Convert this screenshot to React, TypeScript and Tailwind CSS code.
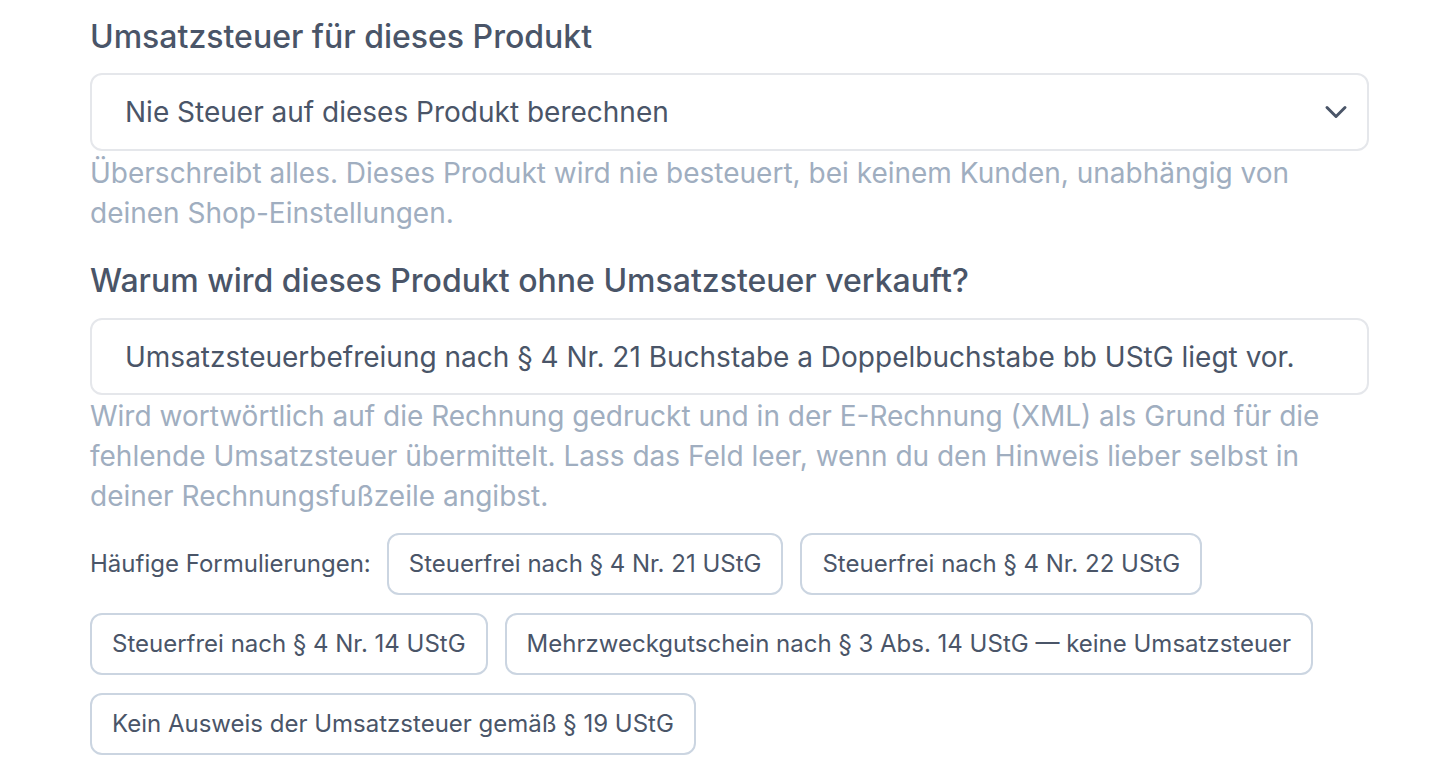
import React from 'react';
import { ChevronDown } from 'lucide-react';

const phrases = [
  'Steuerfrei nach § 4 Nr. 21 UStG',
  'Steuerfrei nach § 4 Nr. 22 UStG',
  'Steuerfrei nach § 4 Nr. 14 UStG',
  'Mehrzweckgutschein nach § 3 Abs. 14 UStG — keine Umsatzsteuer',
  'Kein Ausweis der Umsatzsteuer gemäß § 19 UStG',
];

export default function App() {
  return (
    <div className="min-h-screen bg-white font-['Inter',sans-serif] text-[#4a5568]">
      <div className="ml-[90px] w-[1279px] pt-[17px]">
        <h2 className="text-[32px] leading-[40px] font-medium text-[#4a5568]">Umsatzsteuer für dieses Produkt</h2>
        <div className="mt-[16px] flex h-[78px] items-center justify-between rounded-[12px] border-2 border-[#e5e7eb] pl-[33px] pr-[13px]">
          <span className="text-[28px] text-[#4a5568]">Nie Steuer auf dieses Produkt berechnen</span>
          <ChevronDown className="h-[36px] w-[36px] text-[#4a5568]" strokeWidth={2} />
        </div>
        <p className="mt-[2px] text-[28px] leading-[40px] text-[#a0aec0]">
          Überschreibt alles. Dieses Produkt wird nie besteuert, bei keinem Kunden, unabhängig von deinen Shop-Einstellungen.
        </p>

        <h2 className="mt-[28px] text-[32px] leading-[40px] font-medium text-[#4a5568]">
          Warum wird dieses Produkt ohne Umsatzsteuer verkauft?
        </h2>
        <div className="mt-[17px] flex h-[77px] items-center rounded-[12px] border-2 border-[#e5e7eb] pl-[33px] pr-[13px]">
          <span className="text-[28px] text-[#4a5568]">
            Umsatzsteuerbefreiung nach § 4 Nr. 21 Buchstabe a Doppelbuchstabe bb UStG liegt vor.
          </span>
        </div>
        <p className="mt-[1px] text-[28px] leading-[40px] text-[#a0aec0]">
          Wird wortwörtlich auf die Rechnung gedruckt und in der E-Rechnung (XML) als Grund für die fehlende Umsatzsteuer übermittelt. Lass das Feld leer, wenn du den Hinweis lieber selbst in deiner Rechnungsfußzeile angibst.
        </p>

        <div className="mt-[17px] flex flex-wrap items-center gap-x-[17px] gap-y-[18px] pr-[50px]">
          <span className="mr-[-1px] text-[24px] text-[#4a5568]">Häufige Formulierungen:</span>
          {phrases.map((p) => (
            <button
              key={p}
              className="h-[62px] rounded-[12px] border-2 border-[#cbd5e1] bg-white px-[20px] text-[24px] text-[#4a5568]"
            >
              {p}
            </button>
          ))}
        </div>
      </div>
    </div>
  );
}
